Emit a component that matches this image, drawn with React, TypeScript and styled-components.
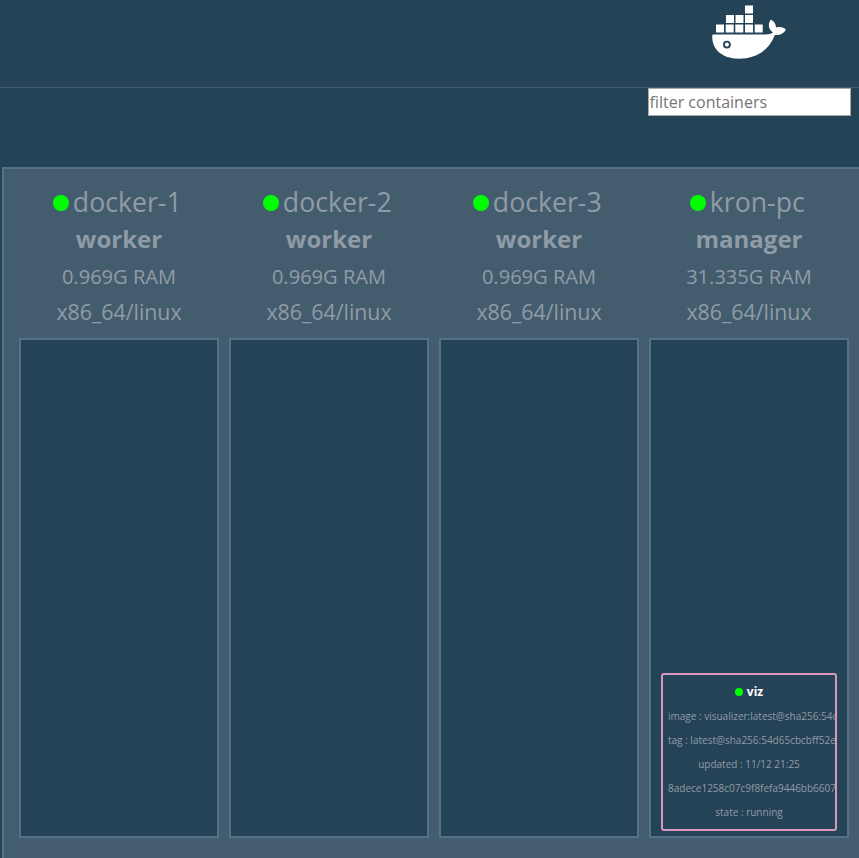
import React from 'react';
import styled, { createGlobalStyle } from 'styled-components';

const Global = createGlobalStyle`
  *, *::before, *::after { box-sizing: border-box; }
  html, body { margin: 0; height: 100%; overflow: hidden; }
  body {
    background: #254356;
    color: #8f9ca7;
    font-family: 'Open Sans', 'Noto Sans', sans-serif;
  }
`;

const Page = styled.div`
  display: flex;
  flex-direction: column;
  height: 100vh;
  overflow: hidden;
`;

const Header = styled.header`
  flex: none;
  height: 88px;
  padding: 5px 72px 0 0;
  border-bottom: 1px solid #445d6e;
  display: flex;
  justify-content: flex-end;
`;

const Logo = styled.svg`
  width: 75px;
  height: 55px;
  fill: #fff;
`;

const Toolbar = styled.div`
  flex: none;
  height: 79px;
  padding-right: 8px;
  display: flex;
  justify-content: flex-end;
  align-items: flex-start;
`;

const Filter = styled.input`
  width: 203px;
  height: 28px;
  padding: 1px 0 1px 0.5px;
  border: 1px solid #a9a9a9;
  border-radius: 0;
  background: #fff;
  color: #333;
  font: 16px 'Open Sans', sans-serif;
  &::placeholder { color: #757575; opacity: 1; }
`;

const Cluster = styled.main`
  flex: none;
  width: 900px;
  height: 720px;
  margin-left: 2px;
  padding: 15px;
  border: 2px solid #537188;
  background: #445d6e;
  display: flex;
  gap: 10px;
`;

const NodeColumn = styled.section`
  flex: none;
  width: 200px;
`;

const NodeInfo = styled.div`
  height: 154px;
  display: flex;
  flex-direction: column;
  align-items: center;
  white-space: nowrap;
`;

const Line = styled.div<{ $size: number; $height: number; $bold?: boolean }>`
  display: flex;
  align-items: center;
  height: ${p => p.$height}px;
  font-size: ${p => p.$size}px;
  font-weight: ${p => (p.$bold ? 700 : 400)};
  line-height: ${p => p.$height}px;
`;

const NameLine = styled(Line)`
  padding-right: 3.5px;
`;

const NameLabel = styled.span`
  padding-bottom: 2px;
  line-height: 35px;
`;

const Dot = styled.span<{ $size: number }>`
  flex: none;
  width: ${p => p.$size}px;
  height: ${p => p.$size}px;
  margin-right: 4px;
  border-radius: 50%;
  background: #00ff00;
`;

const TaskArea = styled.div`
  height: 500px;
  padding: 0 10px 5px;
  border: 2px solid #537188;
  background: #254356;
  display: flex;
  flex-direction: column;
  justify-content: flex-end;
`;

const Task = styled.article`
  width: 176px;
  height: 158px;
  padding: 5px 0 0 5px;
  border: 2px solid #d898bc;
  border-radius: 3px;
  overflow: hidden;
`;

const TaskName = styled.div`
  display: flex;
  align-items: center;
  justify-content: center;
  height: 24px;
  padding-right: 5px;
  color: #fff;
  font-size: 12px;
  font-weight: 700;
  line-height: 24px;
`;

const TaskDetail = styled.div<{ $clipped?: boolean }>`
  height: 24px;
  padding-right: ${p => (p.$clipped ? 0 : 5)}px;
  overflow: hidden;
  font-size: 10px;
  line-height: 24px;
  text-align: ${p => (p.$clipped ? 'left' : 'center')};
  white-space: nowrap;
`;

type TaskInfo = { name: string; details: { text: string; clipped?: boolean }[] };
type SwarmNode = { name: string; role: string; ram: string; tasks: TaskInfo[] };

const nodes: SwarmNode[] = [
  { name: 'docker-1', role: 'worker', ram: '0.969G RAM', tasks: [] },
  { name: 'docker-2', role: 'worker', ram: '0.969G RAM', tasks: [] },
  { name: 'docker-3', role: 'worker', ram: '0.969G RAM', tasks: [] },
  {
    name: 'kron-pc',
    role: 'manager',
    ram: '31.335G RAM',
    tasks: [
      {
        name: 'viz',
        details: [
          { text: 'image : visualizer:latest@sha256:54d', clipped: true },
          { text: 'tag : latest@sha256:54d65cbcbff52e', clipped: true },
          { text: 'updated : 11/12 21:25' },
          { text: '8adece1258c07c9f8fefa9446bb6607', clipped: true },
          { text: 'state : running' },
        ],
      },
    ],
  },
];

const crates = [
  [33, 0.5], [14, 10], [23.5, 10], [33, 10],
  [4, 19.5], [13.7, 19.5], [23.3, 19.5], [33, 19.5], [42.7, 19.5],
];

function Whale() {
  return (
    <Logo viewBox="0 0 75 55" aria-label="Docker">
      {crates.map(([x, y]) => (
        <rect key={`${x}-${y}`} x={x} y={y} width="8" height="8" />
      ))}
      <path
        d="M1 29.5 H53.5 C57 29.5 59.5 28.8 61 27.6 C56.4 24.5 55.5 19 58.9 14.6 C62 16.5 64 19 64 22.5 C67.5 21.5 71 22 73.8 24.4 C71.8 28.7 67.5 30.3 62.8 30 C57 45.5 44 53.7 27 53.7 C8.5 53.7 -0.5 43 .3 30.3 Q.4 29.5 1 29.5 Z"
      />
      <circle cx="14.9" cy="39.6" r="3" stroke="#254356" strokeWidth="1.9" />
    </Logo>
  );
}

export default function App() {
  return (
    <Page>
      <Global />
      <Header><Whale /></Header>
      <Toolbar><Filter placeholder="filter containers" /></Toolbar>
      <Cluster>
        {nodes.map(node => (
          <NodeColumn key={node.name}>
            <NodeInfo>
              <NameLine $size={26.67} $height={37}>
                <Dot $size={16} />
                <NameLabel>{node.name}</NameLabel>
              </NameLine>
              <Line $size={24} $height={36} $bold>{node.role}</Line>
              <Line $size={20.1} $height={39}>{node.ram}</Line>
              <Line $size={21.33} $height={31}>x86_64/linux</Line>
            </NodeInfo>
            <TaskArea>
              {node.tasks.map(task => (
                <Task key={task.name}>
                  <TaskName><Dot $size={8} />{task.name}</TaskName>
                  {task.details.map(d => (
                    <TaskDetail key={d.text} $clipped={d.clipped}>{d.text}</TaskDetail>
                  ))}
                </Task>
              ))}
            </TaskArea>
          </NodeColumn>
        ))}
      </Cluster>
    </Page>
  );
}
